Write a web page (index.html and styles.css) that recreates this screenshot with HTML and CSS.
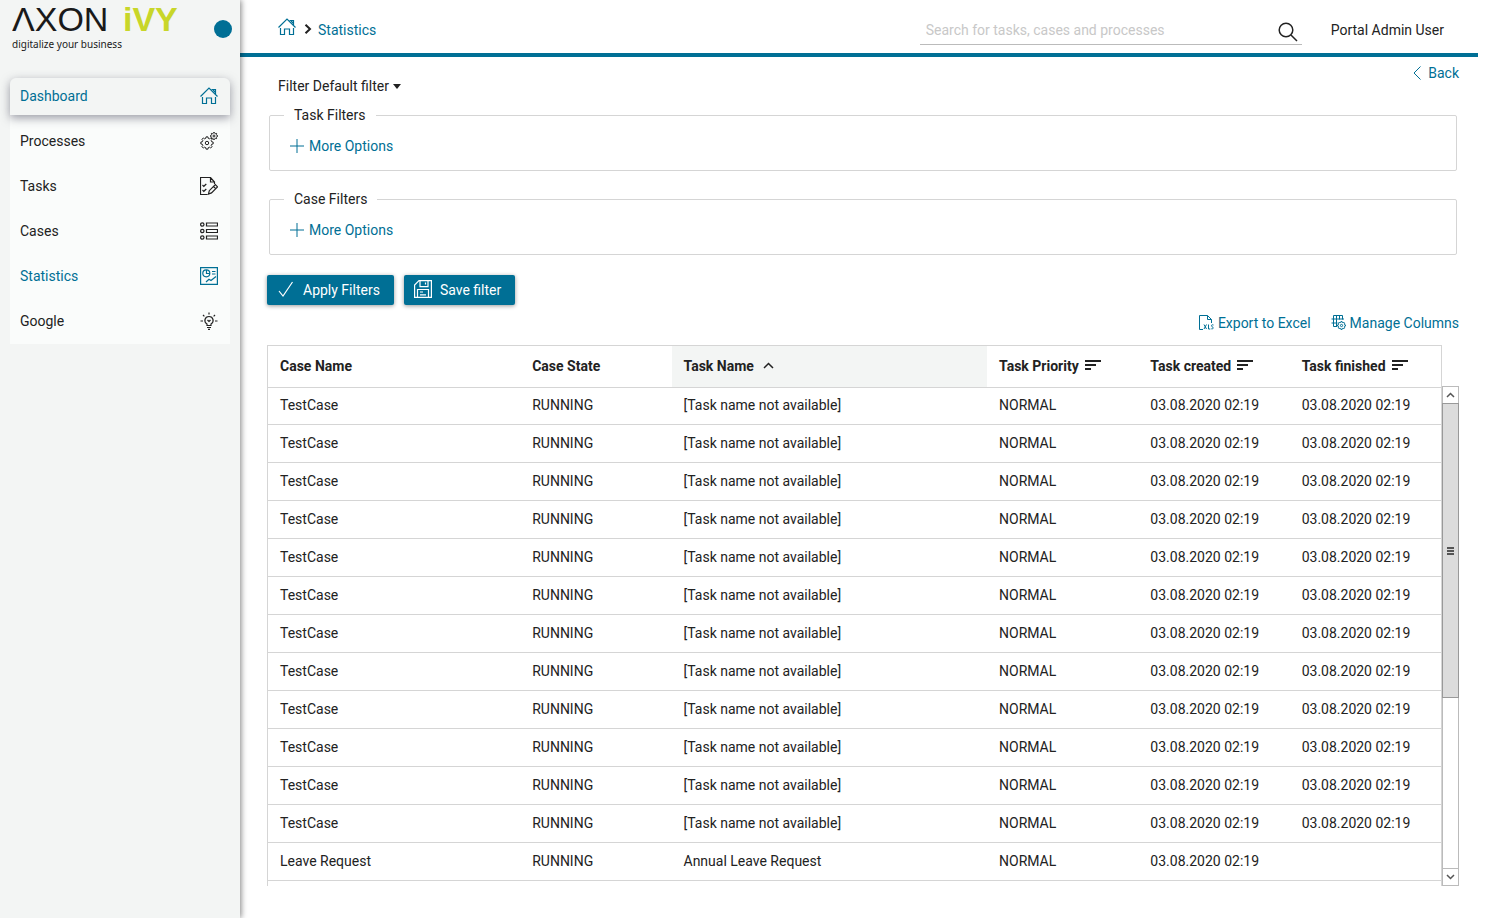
FILE: index.html
```html
<!DOCTYPE html>
<html lang="en">
<head>
  <meta charset="UTF-8">
  <title>Portal | Statistics</title>
  <meta name="viewport" content="width=device-width, initial-scale=1.0" />
  <link rel="stylesheet" href="styles.css">
</head>
<body>
  <!-- shared icons -->
  <svg class="sprite" aria-hidden="true">
    <symbol id="home" viewBox="0 0 18 18">
      <path d="M.5 9.5 9 1l8.5 8.5M2.5 10v6.5h4V11h5v5.500h4V10"/>
      <path d="M11.5 2.500h4v4.500M13 3l2 2"/>
    </symbol>
    <symbol id="sort" viewBox="0 0 16 12">
      <path d="M0 2h16M0 6h11M0 10h6"/>
    </symbol>
    <symbol id="plus" viewBox="0 0 14 14">
      <path d="M7 0v14M0 7h14"/>
    </symbol>
    <symbol id="gear" viewBox="-6.5 -6.5 13 13">
      <path class="gear" d="M5.700-.900V.900L4.400 1.100 3.900 2.300 4.700 3.400 3.400 4.700 2.300 3.900 1.100 4.400.900 5.700H-.900L-1.100 4.400-2.300 3.900-3.400 4.700-4.700 3.400-3.900 2.300-4.400 1.100-5.700.900V-.900L-4.400-1.100-3.900-2.300-4.700-3.400-3.400-4.700-2.300-3.900-1.100-4.400-.900-5.700H.900L1.100-4.400 2.300-3.900 3.400-4.700 4.700-3.400 3.900-2.300 4.400-1.100z"/>
      <circle class="gear" r="1.600"/>
    </symbol>
  </svg>

  <div class="layout">
    <aside class="sidebar">
      <div class="brand">
        <svg class="logo" width="172" height="52" viewBox="0 0 172 52" role="img" aria-label="Axon Ivy, digitalize your business">
          <text class="logo-axon" x="0" y="31">ΛXON</text>
          <text class="logo-ivy" x="111" y="31">iVY</text>
          <text class="logo-claim" x="0" y="48">digitalize your business</text>
        </svg>
        <button class="menu-toggle" aria-label="Toggle menu"></button>
      </div>
      <nav class="menu">
        <a class="menu-item current" href="#">Dashboard
          <svg class="icon" width="18" height="18"><use href="#home"/></svg>
        </a>
        <a class="menu-item" href="#">Processes
          <svg class="icon" width="18" height="18" viewBox="0 0 18 18">
            <use href="#gear" x="0" y="4" width="14" height="14"/>
            <use href="#gear" x="10" y="0" width="8" height="8"/>
          </svg>
        </a>
        <a class="menu-item" href="#">Tasks
          <svg class="icon" width="18" height="18" viewBox="0 0 18 18">
            <path d="M14.500 7V5l-4-4.500H.5v17h7M10.500.5V5h4M2.500 8l1.300 1.300L6.300 7M2.500 13l1.300 1.300L6.300 12M8.500 17l.8-3.300 6-6 2.200 2.200-6 6zM13.500 9.500l2.200 2.200"/>
          </svg>
        </a>
        <a class="menu-item" href="#">Cases
          <svg class="icon" width="18" height="18" viewBox="0 0 18 18">
            <circle cx="2.300" cy="2.500" r="1.700"/><circle cx="2.300" cy="9" r="1.700"/><circle cx="2.300" cy="15.500" r="1.700"/>
            <path d="M6.500 1h11v3h-11zM6.500 7.500h11v3h-11zM6.500 14h11v3h-11z"/>
          </svg>
        </a>
        <a class="menu-item active" href="#">Statistics
          <svg class="icon" width="18" height="18" viewBox="0 0 18 18">
            <path d="M.6.600h16.800v16.800H.6zM6.500 3v3.500H10M12 4.500h3.500M12 7h3.500M6 15l3-2.700 2 1.200 5-4"/>
            <circle cx="6.300" cy="6.300" r="3.500"/>
          </svg>
        </a>
        <a class="menu-item" href="#">Google
          <svg class="icon" width="18" height="18" viewBox="0 0 18 18">
            <path d="M7 13.500v-1.500C3.500 10 4.500 4.500 9 4.500s5.500 5.500 2 7.500v1.500zM7 15.500h4M8 17.300h2M7.500 8 9 9.500 10.500 8M9 .5v2M3 3l1.400 1.400M15 3l-1.400 1.400M.5 9h2.500M15 9h2.500"/>
          </svg>
        </a>
      </nav>
    </aside>

    <div class="main">
      <header class="topbar">
        <nav class="breadcrumb">
          <a href="#" aria-label="Home"><svg class="icon home-icon" width="18" height="18"><use href="#home"/></svg></a>
          <svg class="crumb-arrow" width="8" height="10" viewBox="0 0 8 10"><path d="M1.500.700 6 5 1.500 9.300"/></svg>
          <a href="#">Statistics</a>
        </nav>
        <div class="search">
          <input type="text" aria-label="Search" placeholder="Search for tasks, cases and processes">
          <button aria-label="Start search">
            <svg class="icon" width="20" height="20" viewBox="0 0 20 20"><circle cx="8" cy="8" r="6.800"/><path d="m13 13 6 6"/></svg>
          </button>
        </div>
        <a class="user" href="#">Portal Admin User</a>
      </header>

      <main class="content">
        <div class="page-head">
          <button class="filter-select">Filter Default filter
            <svg width="8" height="5" viewBox="0 0 8 5"><path d="M0 0h8L4 5z"/></svg>
          </button>
          <a class="back" href="#">
            <svg class="icon" width="8" height="14" viewBox="0 0 8 14"><path d="M7.500.500 1 7l6.500 6.500"/></svg>Back
          </a>
        </div>

        <fieldset class="filters">
          <legend>Task Filters</legend>
          <button class="link-btn"><svg class="icon" width="14" height="14"><use href="#plus"/></svg>More Options</button>
        </fieldset>

        <fieldset class="filters">
          <legend>Case Filters</legend>
          <button class="link-btn"><svg class="icon" width="14" height="14"><use href="#plus"/></svg>More Options</button>
        </fieldset>

        <div class="actions">
          <button class="btn">
            <svg class="icon" width="18" height="18" viewBox="0 0 18 18"><path d="M2 11l4 5L15.500 2"/></svg>Apply Filters
          </button>
          <button class="btn">
            <svg class="icon" width="18" height="18" viewBox="0 0 18 18">
              <path d="M.6 17.400V5l4.400-4.400h12.400v16.800zM6 .6v6h8v-6M11.500 2.500v2M3.500 17.400V9.500h11v7.900M6 12h3M6 14.800h6"/>
            </svg>Save filter
          </button>
        </div>

        <div class="table-tools">
          <button class="link-btn">
            <svg class="icon" width="15" height="15" viewBox="0 0 15 15">
              <path d="M4 14.500H.5V.5h8l4 4V8M8.500.5v4h4"/>
              <path d="m5 9.500 2.500 4.500M7.500 9.500 5 14M9.500 9.500V14h1.800M14.500 10c-2.500-1-2.500 1.500-1 2s.5 2.500-1.200 1.800"/>
            </svg>Export to Excel
          </button>
          <button class="link-btn">
            <svg class="icon" width="15" height="15" viewBox="0 0 15 15">
              <path d="M6 11.500H2.500V.5h9v4M.5 4h12.500M.5 8h6M5.500.5v11M8.500.5v4"/>
              <use href="#gear" x="6" y="6" width="9" height="9"/>
            </svg>Manage Columns
          </button>
        </div>

        <div class="table-view">
          <div class="table-wrap">
            <table class="data-table">
              <colgroup>
                <col class="col-case"><col class="col-small"><col class="col-task">
                <col class="col-small"><col class="col-small"><col class="col-small">
              </colgroup>
              <thead>
                <tr>
                  <th>Case Name</th>
                  <th>Case State</th>
                  <th class="sorted">Task Name<svg class="sort-up" width="11" height="7" viewBox="0 0 11 7"><path d="M1 6l4.500-4.500L10 6"/></svg></th>
                  <th>Task Priority<svg class="sort-icon" width="16" height="12"><use href="#sort"/></svg></th>
                  <th>Task created<svg class="sort-icon" width="16" height="12"><use href="#sort"/></svg></th>
                  <th>Task finished<svg class="sort-icon" width="16" height="12"><use href="#sort"/></svg></th>
                </tr>
              </thead>
              <tbody id="rows"></tbody>
            </table>
          </div>
          <div class="scrollbar">
            <button class="scroll-btn" aria-label="Scroll up"><svg width="9" height="6" viewBox="0 0 9 6"><path d="M1 5l3.500-3.500L8 5"/></svg></button>
            <div class="scroll-track">
              <div class="scroll-thumb"><svg width="7" height="8" viewBox="0 0 7 8"><path d="M0 1h7M0 4h7M0 7h7"/></svg></div>
            </div>
            <button class="scroll-btn" aria-label="Scroll down"><svg width="9" height="6" viewBox="0 0 9 6"><path d="M1 1l3.500 3.500L8 1"/></svg></button>
          </div>
        </div>
      </main>
    </div>
  </div>

  <script>
    const date = "03.08.2020 02:19";
    const data = [];
    for (let i = 0; i < 12; i++) {
      data.push(["TestCase", "RUNNING", "[Task name not available]", "NORMAL", date, date]);
    }
    data.push(["Leave Request", "RUNNING", "Annual Leave Request", "NORMAL", date, ""]);

    const rows = document.getElementById("rows");
    data.forEach(item => {
      const tr = document.createElement("tr");
      item.forEach(value => {
        const td = document.createElement("td");
        td.textContent = value;
        tr.appendChild(td);
      });
      rows.appendChild(tr);
    });
  </script>
</body>
</html>
```
FILE: styles.css
```css
* {
  box-sizing: border-box;
}

body {
  margin: 0;
  font-family: Roboto, sans-serif;
  font-size: 14px;
  line-height: 16px;
  color: #222;
  background: #fff;
}

a {
  color: #006f95;
  text-decoration: none;
}

button, input {
  font: inherit;
  color: inherit;
  background: none;
  border: none;
  padding: 0;
}

button {
  cursor: pointer;
}

svg {
  fill: none;
  stroke: currentColor;
  flex: none;
}

.sprite {
  position: absolute;
  width: 0;
  height: 0;
}

.gear {
  stroke-width: 1;
  vector-effect: non-scaling-stroke;
}

.layout {
  display: flex;
  min-height: 100vh;
}

/* sidebar */
.sidebar {
  width: 240px;
  flex: none;
  background: #f3f5f4;
  box-shadow: 1px 0 6px rgba(0, 0, 0, 0.5);
  z-index: 1;
}

.brand {
  display: flex;
  justify-content: space-between;
  align-items: flex-start;
  height: 78px;
  padding: 0 8px 0 12px;
}

.logo text {
  stroke: none;
  fill: #1a1a1a;
  font-family: "Liberation Sans", Arial, sans-serif;
}

.logo .logo-axon {
  font-size: 34px;
}

.logo .logo-ivy {
  font-size: 34px;
  font-weight: 700;
  fill: #c8d629;
}

.logo .logo-claim {
  font-family: "Noto Sans", sans-serif;
  font-size: 10px;
}

.menu-toggle {
  width: 18px;
  height: 18px;
  margin-top: 20px;
  border-radius: 50%;
  background: #006f95;
}

.menu {
  display: flex;
  flex-direction: column;
  gap: 8px;
  margin: 0 10px;
  padding-bottom: 4px;
  background: #fafcfb;
  border-radius: 6px 6px 0 0;
}

.menu-item {
  display: flex;
  justify-content: space-between;
  align-items: center;
  height: 37px;
  padding: 0 12px 2px 10px;
  color: #222;
}

.menu-item .icon {
  stroke-width: 1.2;
}

.menu-item.current {
  color: #006f95;
  background: #f3f5f4;
  border-radius: 6px 6px 0 0;
  box-shadow: 0 3px 10px rgba(60, 60, 80, 0.5);
}

.menu-item.active {
  color: #006f95;
}

/* top bar */
.main {
  flex: 1;
  min-width: 0;
  margin-right: 8px;
}

.topbar {
  display: flex;
  align-items: center;
  height: 57px;
  padding: 8px 34px 0 38px;
  border-bottom: 4px solid #006f95;
}

.breadcrumb {
  display: flex;
  align-items: center;
  flex: 1;
  padding-bottom: 2px;
}

.home-icon {
  display: block;
  margin-bottom: 6px;
  stroke-width: 1.2;
}

.crumb-arrow {
  margin: 0 6px 2px 8px;
  stroke-width: 2;
}

.search {
  display: flex;
  align-items: center;
  width: 382px;
  height: 28px;
  border-bottom: 1px solid #bbb;
}

.search input {
  flex: 1;
  padding: 0 6px;
  outline: none;
}

.search input::placeholder {
  color: #c8c8c8;
  opacity: 1;
}

.search button {
  display: flex;
  padding: 3px 4px 0 0;
}

.search .icon {
  stroke-width: 1.5;
}

.user {
  margin-left: 29px;
  padding-bottom: 2px;
  color: #222;
}

/* content */
.content {
  padding: 8px 19px 0 27px;
}

.page-head {
  display: flex;
  justify-content: space-between;
  align-items: flex-start;
}

.filter-select {
  display: flex;
  align-items: center;
  gap: 4px;
  margin: 13px 0 0 11px;
}

.filter-select svg {
  fill: currentColor;
  stroke: none;
}

.back {
  display: flex;
  align-items: center;
  gap: 7px;
}

.filters {
  margin: 13px 2px 20px;
  padding: 15px 20px 16px 14px;
  border: 1px solid #d5d5d5;
  border-radius: 2px;
}

.filters + .filters {
  margin-top: 0;
}

.filters legend {
  padding: 0 10px;
}

.filters .link-btn {
  margin-left: 6px;
}

.link-btn {
  display: flex;
  align-items: center;
  gap: 5px;
  color: #006f95;
}

.link-btn .icon,
.back .icon {
  margin-bottom: 1px;
}

.actions {
  display: flex;
  gap: 10px;
}

.btn {
  display: flex;
  align-items: center;
  gap: 8px;
  height: 30px;
  padding: 0 14px 0 10px;
  color: #fff;
  background: #006f95;
  border-radius: 2px;
  box-shadow: 0 1px 4px rgba(0, 0, 0, 0.4);
}

.btn .icon {
  margin-bottom: 2px;
  stroke-width: 1.2;
}

.table-tools {
  display: flex;
  justify-content: flex-end;
  gap: 20px;
  margin: 10px 0 14px;
}

.table-tools .link-btn {
  gap: 4px;
}

/* table */
.table-view {
  display: flex;
  height: calc(100vh - 377px);
}

.table-wrap {
  flex: 1;
  overflow: hidden;
  border: 1px solid #d5d5d5;
  border-bottom: none;
}

.data-table {
  width: 100%;
  table-layout: fixed;
  border-collapse: separate;
  border-spacing: 0;
}

.col-case {
  width: 21.5%;
}

.col-task {
  width: 26.9%;
}

.data-table th,
.data-table td {
  height: 38px;
  padding: 0 12px 2px;
  text-align: left;
  white-space: nowrap;
  border-bottom: 1px solid #d5d5d5;
}

.data-table th {
  height: 42px;
  font-weight: 700;
}

.data-table tbody tr:first-child td {
  height: 37px;
}

.data-table .sorted {
  background: #f3f5f4;
}

.sort-icon {
  margin-left: 6px;
  stroke-width: 2;
}

.sort-up {
  margin: 0 0 2px 9px;
  stroke-width: 1.5;
}

.scrollbar {
  display: flex;
  flex-direction: column;
  width: 17px;
  margin-top: 41px;
  border: 1px solid #bbb;
}

.scroll-btn {
  display: flex;
  align-items: center;
  justify-content: center;
  height: 16px;
  color: #555;
}

.scroll-btn svg {
  stroke-width: 1.5;
}

.scroll-track {
  flex: 1;
  border-bottom: 1px solid #bbb;
}

.scroll-thumb {
  display: flex;
  align-items: center;
  justify-content: center;
  height: 63.5%;
  margin: 0 -1px;
  color: #555;
  background: #dcdcdc;
  border: 1px solid #999;
}

.scroll-thumb svg {
  stroke-width: 2;
}
```
